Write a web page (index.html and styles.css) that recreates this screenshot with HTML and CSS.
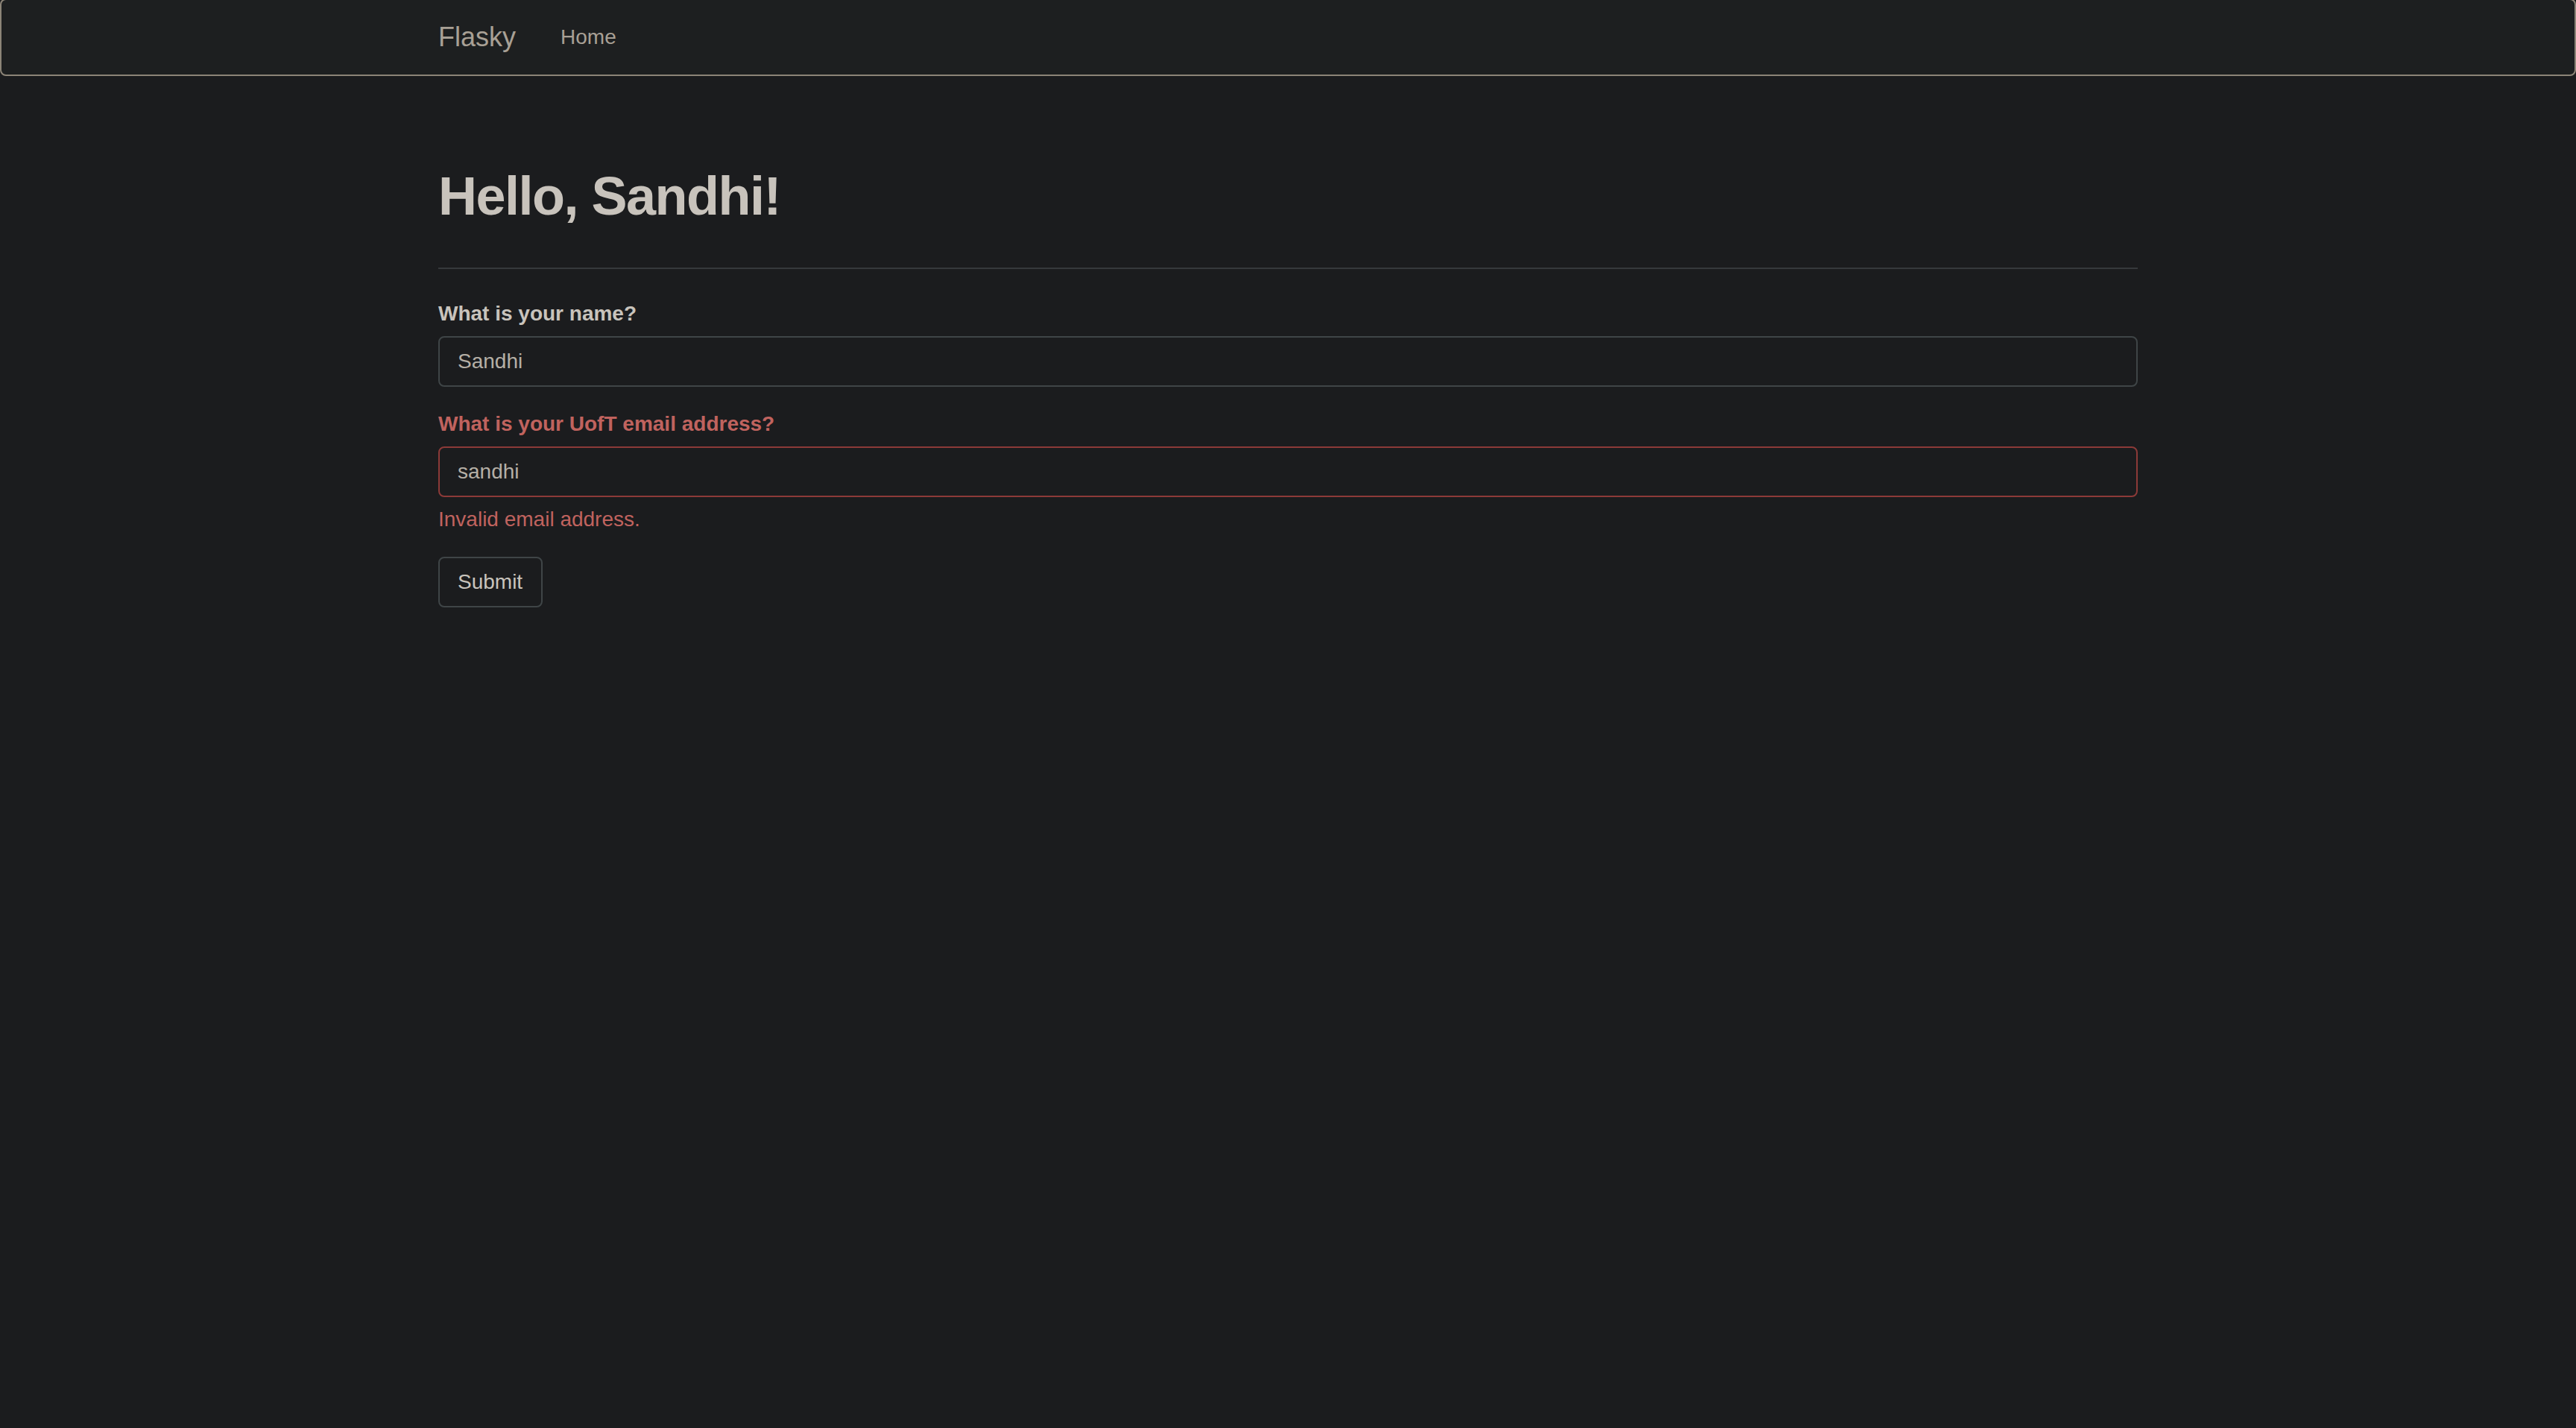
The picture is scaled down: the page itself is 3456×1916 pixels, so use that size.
FILE: index.html
```html
<!DOCTYPE html>
<html lang="en">
<head>
<meta charset="utf-8">
<title>Flasky</title>
<link rel="stylesheet" href="styles.css">
</head>
<body>
<nav class="navbar">
  <div class="container nav-inner">
    <a class="brand" href="#">Flasky</a>
    <ul class="nav-links">
      <li><a href="#">Home</a></li>
    </ul>
  </div>
</nav>
<main class="container">
  <div class="page-header">
    <h1>Hello, Sandhi!</h1>
  </div>
  <form class="form">
    <div class="form-group">
      <label class="label" for="name">What is your name?</label>
      <input class="input" id="name" type="text" value="Sandhi">
    </div>
    <div class="form-group has-error">
      <label class="label" for="email">What is your UofT email address?</label>
      <input class="input" id="email" type="text" value="sandhi">
      <span class="help-block">Invalid email address.</span>
    </div>
    <button class="btn" type="button">Submit</button>
  </form>
</main>
</body>
</html>
```

FILE: styles.css
```css
* { box-sizing: border-box; }
html, body {
  margin: 0;
  padding: 0;
  background: #1b1c1e;
  font-family: "Liberation Sans", Arial, Helvetica, sans-serif;
  color: #c8c3bc;
}
.container {
  width: 2340px;
  margin: 0 auto;
  padding: 0 30px;
}
.navbar {
  margin-top: -2px;
  margin-bottom: 40px;
  background: #1d1f20;
  border: 2px solid #8c8477;
  border-radius: 8px;
}
.nav-inner {
  display: flex;
  align-items: flex-start;
  height: 100px;
}
.brand {
  display: block;
  padding: 30px 30px 30px 0;
  font-size: 36px;
  line-height: 40px;
  color: #a8a095;
  text-decoration: none;
}
.nav-links {
  list-style: none;
  margin: 0;
  padding: 0;
  display: flex;
}
.nav-links a {
  display: block;
  padding: 30px;
  font-size: 28px;
  line-height: 40px;
  color: #a8a095;
  text-decoration: none;
}
.page-header {
  padding-top: 82px;
  padding-bottom: 56px;
  border-bottom: 2px solid #36393c;
  margin-bottom: 40px;
}
.page-header h1 {
  margin: 0;
  font-size: 72px;
  line-height: 79px;
  font-weight: 700;
  letter-spacing: -1.5px;
  color: #c8c3bc;
}
.form-group {
  margin-bottom: 30px;
  display: flex;
  flex-direction: column;
  align-items: flex-start;
}
.label {
  font-size: 28px;
  line-height: 40px;
  font-weight: 700;
  margin-bottom: 10px;
  color: #c8c3bc;
}
.input {
  width: 100%;
  height: 68px;
  padding: 12px 24px;
  font-family: "Liberation Sans", Arial, Helvetica, sans-serif;
  font-size: 28px;
  line-height: 40px;
  color: #b5afa6;
  background: #1b1c1e;
  border: 2px solid #3f4547;
  border-radius: 8px;
  outline: none;
}
.has-error .label { color: #c0635e; }
.has-error .input { border-color: #8c3a38; }
.help-block {
  display: block;
  margin-top: 10px;
  font-size: 28px;
  line-height: 40px;
  color: #c0635e;
}
.btn {
  height: 68px;
  width: 140px;
  padding: 12px 24px;
  font-family: "Liberation Sans", Arial, Helvetica, sans-serif;
  font-size: 28px;
  line-height: 40px;
  color: #c8c3bc;
  background: #1b1c1e;
  border: 2px solid #3f4547;
  border-radius: 8px;
  text-align: left;
}
```
